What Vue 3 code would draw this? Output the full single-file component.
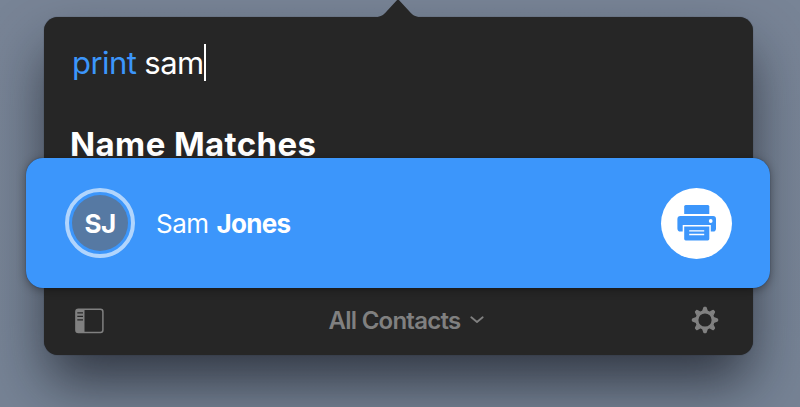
<template>
  <div class="desktop">
    <div class="popover">
      <svg class="arrow" width="44" height="19" viewBox="0 0 44 19">
        <path d="M0 19V18C5 17.6 7.5 15.8 10.5 12.4L20.4 1.7Q22 0 23.6 1.7L33.5 12.4C36.5 15.8 39 17.6 44 18V19Z" fill="#262626" />
      </svg>

      <!-- Command field -->
      <div class="search">
        <span class="command">{{ command }}</span><span class="query">{{ query }}</span><span class="caret"></span>
      </div>

      <h2 class="heading">Name Matches</h2>

      <!-- Selected contact -->
      <div class="contact">
        <div class="avatar"><span>{{ initials }}</span></div>
        <div class="name"><span class="first">{{ contact.first }}</span><b class="last">{{ contact.last }}</b></div>
        <button class="print-btn" aria-label="Print">
          <svg width="40" height="36" viewBox="0 0 40 36" fill="#3c96fb">
            <path d="M8.7 0H30.8Q32.3 0 32.3 1.5V9H7.2V1.5Q7.2 0 8.7 0Z" />
            <path d="M3.4 11H36.1Q39 11 39 14V23.5Q39 26.6 36.1 26.6H33.8V20H5.7V26.6H3.4Q.4 26.6 .4 23.5V14Q.4 11 3.4 11Z" />
            <path d="M7.2 21.4H32.3V33.8Q32.3 35.4 30.8 35.4H8.7Q7.2 35.4 7.2 33.8Z" />
            <circle cx="33.7" cy="16" r="1.9" fill="#fff" />
            <path d="M12.2 25.9H27.2M12.2 29.5H27.2" stroke="#fff" stroke-width="1.4" />
          </svg>
        </button>
      </div>

      <!-- Toolbar -->
      <div class="toolbar">
        <button class="tool" aria-label="Sidebar">
          <svg width="29" height="26" viewBox="0 0 29 26">
            <rect x=".9" y="1.2" width="27" height="23.2" rx="2.5" fill="none" stroke="#808080" stroke-width="1.5" />
            <path d="M1 2H9.5V24H1Z" fill="#808080" />
            <path d="M2.3 4.8H8M2.3 8.3H8M2.3 11.8H8" stroke="#262626" stroke-width="1.3" />
          </svg>
        </button>
        <button class="group">
          <span>All Contacts</span>
          <svg width="14" height="8" viewBox="0 0 14 8">
            <path d="M1.3 1.3L7 6L12.7 1.3" fill="none" stroke="#808080" stroke-width="1.8" stroke-linecap="round" stroke-linejoin="round" />
          </svg>
        </button>
        <button class="tool gear" aria-label="Settings">
          <svg width="28" height="28" viewBox="-14 -14 28 28">
            <circle r="8.15" fill="none" stroke="#808080" stroke-width="3.1" />
            <path v-for="angle in teeth" :key="angle" :transform="`rotate(${angle})`" d="M-2.9 -8.9L-1.8 -12.2Q-1.5 -13.2 -.8 -13.2H.8Q1.5 -13.2 1.8 -12.2L2.9 -8.9Z" fill="#808080" />
          </svg>
        </button>
      </div>
    </div>
  </div>
</template>

<script setup>
import { ref, computed } from 'vue'

const command = ref('print')
const query = ref('sam')
const contact = ref({ first: 'Sam', last: 'Jones' })
const initials = computed(() => contact.value.first[0] + contact.value.last[0])

// Gear teeth, in degrees
const teeth = [0, 45, 90, 135, 180, 225, 270, 315]
</script>

<style>
body {
  margin: 0;
  overflow: hidden;
}
</style>

<style scoped>
.desktop {
  height: 407px;
  box-sizing: border-box;
  padding: 17px 47px 0 44px;
  overflow: hidden;
  background: linear-gradient(#788496, #768395);
  font-family: Inter, 'Liberation Sans', sans-serif;
}
.popover {
  position: relative;
  height: 337.5px;
  display: flex;
  flex-direction: column;
  border-radius: 14px;
  background: #262626;
  box-shadow: 0 0 1px rgba(20, 25, 32, 0.7), 0 30px 56px -4px rgba(15, 18, 26, 0.68);
}
.arrow {
  position: absolute;
  left: 332px;
  top: -18px;
}
.search {
  height: 92px;
  box-sizing: border-box;
  display: flex;
  align-items: center;
  padding: 0 0 2px 28px;
  font-size: 31px;
  font-weight: 400;
  letter-spacing: -0.55px;
  color: #fff;
}
.command {
  color: #3c96fb;
  margin-right: 8px;
}
.caret {
  width: 2px;
  height: 37px;
  background: #fff;
}
.heading {
  height: 49px;
  margin: 0;
  padding: 18px 0 0 26px;
  box-sizing: border-box;
  line-height: 34px;
  font-size: 33px;
  font-weight: 700;
  letter-spacing: 0.4px;
  color: #fff;
}
.contact {
  position: relative;
  flex: none;
  height: 130px;
  box-sizing: border-box;
  margin: 0 -17px 0 -18px;
  padding: 0 38px 0 39px;
  display: flex;
  align-items: center;
  border-radius: 17px;
  background: #3c96fb;
  box-shadow: 0 0 1px rgba(10, 20, 35, 0.6), 0 2px 10px rgba(0, 0, 0, 0.35);
  color: #fff;
}
.avatar {
  width: 70px;
  height: 70px;
  box-sizing: border-box;
  flex: none;
  padding: 3px;
  border: 4px solid #b1d5fd;
  border-radius: 50%;
}
.avatar span {
  display: flex;
  height: 100%;
  align-items: center;
  justify-content: center;
  border-radius: 50%;
  background: #5679a3;
  font-size: 26px;
  font-weight: 700;
  letter-spacing: -0.7px;
}
.name {
  display: flex;
  flex: 1;
  margin-left: 21px;
  gap: 8px;
  font-size: 26px;
}
.first {
  font-weight: 400;
  letter-spacing: -0.5px;
}
.last {
  font-weight: 700;
  letter-spacing: -0.7px;
}
button {
  margin: 0;
  padding: 0;
  border: none;
  background: none;
  font-family: inherit;
}
.print-btn {
  width: 71px;
  height: 71px;
  border-radius: 50%;
  background: #fff;
  display: flex;
  align-items: center;
  justify-content: center;
}
.toolbar {
  flex: 1;
  display: flex;
  align-items: center;
  justify-content: space-between;
  padding: 0 34px 0 31px;
}
.tool,
.group {
  display: flex;
  align-items: center;
}
.group {
  gap: 10px;
  margin-left: 18px;
  padding-bottom: 2px;
  font-size: 24px;
  font-weight: 600;
  letter-spacing: -0.75px;
  color: #808080;
}
.gear {
  padding-bottom: 3px;
}
</style>
